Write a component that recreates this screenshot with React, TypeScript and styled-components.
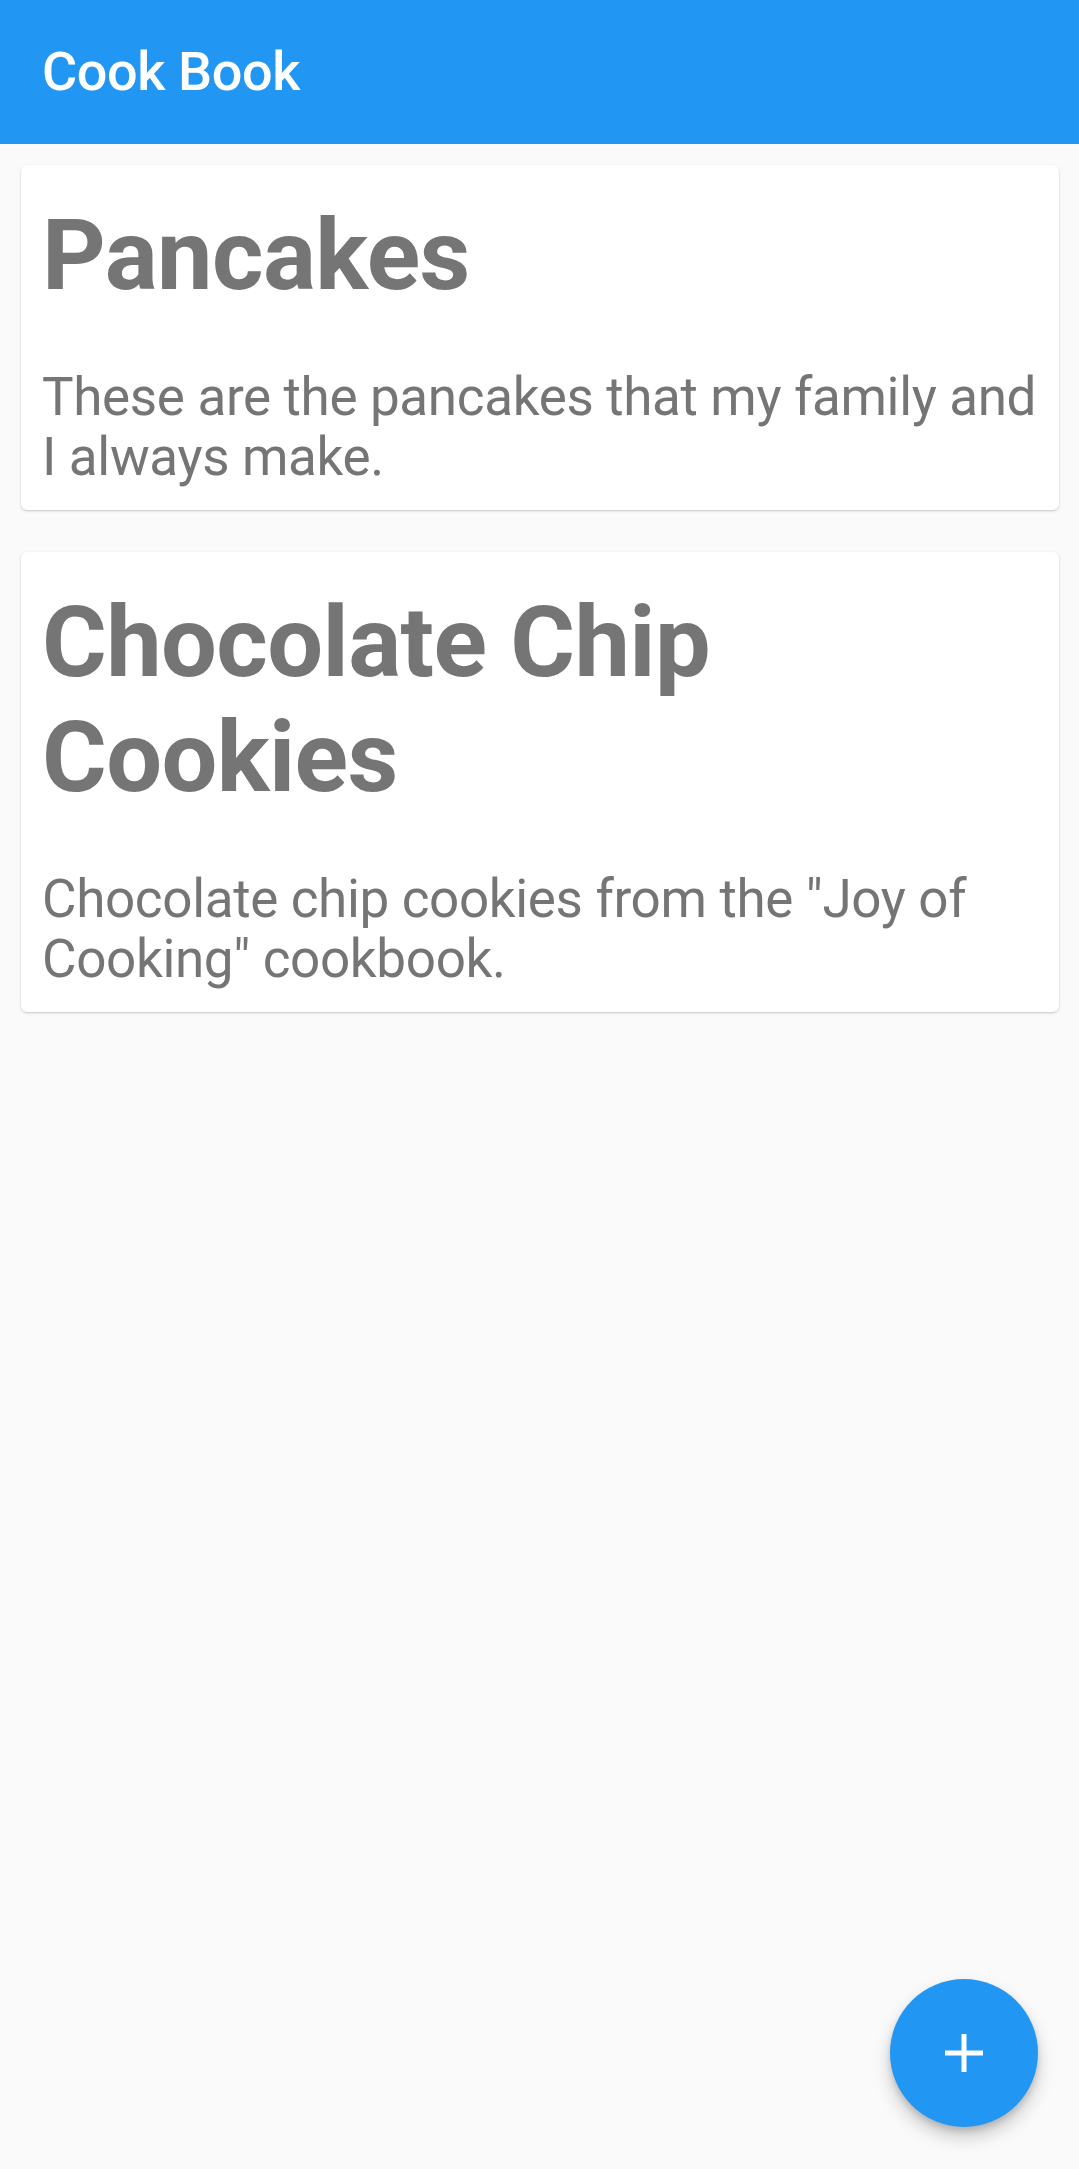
import React from "react";
import styled, { createGlobalStyle } from "styled-components";

const GlobalStyle = createGlobalStyle`
  html, body {
    margin: 0;
    padding: 0;
    background-color: #fafafa;
    font-family: Roboto, "Noto Sans", Arial, sans-serif;
  }
  * {
    box-sizing: border-box;
  }
`;

const Screen = styled.div`
  min-height: 100vh;
  background-color: #fafafa;
  position: relative;
`;

const AppBar = styled.header`
  height: 144px;
  background-color: #2196f3;
  display: flex;
  align-items: center;
  padding: 0 42px;
`;

const AppTitle = styled.h1`
  margin: 0;
  font-size: 54px;
  font-weight: 500;
  letter-spacing: -0.4px;
  color: #fff;
  line-height: 64px;
`;

const RecipeList = styled.main`
  display: flex;
  flex-direction: column;
  gap: 42px;
  padding: 21px 20px 21px 21px;
`;

const Card = styled.article`
  background-color: #fff;
  border-radius: 6px;
  box-shadow: 0 1px 3px rgba(0, 0, 0, 0.16), 0 1px 1px rgba(0, 0, 0, 0.06);
  padding: 33px 10px 23px 21px;
`;

const RecipeName = styled.h2`
  margin: 0 0 54px;
  font-size: 99px;
  font-weight: 700;
  letter-spacing: -0.6px;
  line-height: 115px;
  color: #757575;
`;

const RecipeDescription = styled.p`
  margin: 0;
  font-size: 53px;
  font-weight: 400;
  letter-spacing: -0.35px;
  line-height: 60px;
  color: #757575;
`;

const Fab = styled.button`
  position: fixed;
  right: 41px;
  bottom: 42px;
  width: 148px;
  height: 148px;
  border-radius: 50%;
  border: none;
  background-color: #2196f3;
  box-shadow: 0 10px 18px rgba(0, 0, 0, 0.2), 0 4px 6px rgba(0, 0, 0, 0.14);
  display: flex;
  align-items: center;
  justify-content: center;
  cursor: pointer;
`;

const recipes = [
  {
    name: "Pancakes",
    description: "These are the pancakes that my family and I always make.",
  },
  {
    name: "Chocolate Chip Cookies",
    description: 'Chocolate chip cookies from the "Joy of Cooking" cookbook.',
  },
];

const App: React.FC = () => {
  return (
    <Screen>
      <GlobalStyle />
      <AppBar>
        <AppTitle>Cook Book</AppTitle>
      </AppBar>
      <RecipeList>
        {recipes.map((r) => (
          <Card key={r.name}>
            <RecipeName>{r.name}</RecipeName>
            <RecipeDescription>{r.description}</RecipeDescription>
          </Card>
        ))}
      </RecipeList>
      <Fab aria-label="Add recipe">
        <svg width="38" height="38" viewBox="0 0 38 38">
          <rect x="16.5" y="0" width="5" height="38" fill="#fff" />
          <rect x="0" y="16.5" width="38" height="5" fill="#fff" />
        </svg>
      </Fab>
    </Screen>
  );
};

export default App;
